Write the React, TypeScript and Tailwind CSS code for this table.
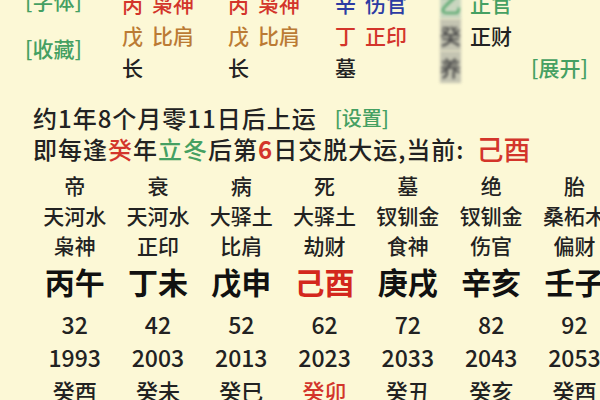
import React from "react";

const font = { fontFamily: '"Noto Sans CJK SC", "Noto Sans", sans-serif' };

type Cell = { t: string; c: string };

const pillars: { r1: Cell[]; r2: Cell[]; r3: Cell[] }[] = [
  {
    r1: [{ t: "丙", c: "text-[#d3352b]" }, { t: "枭神", c: "text-[#d3352b]" }],
    r2: [{ t: "戊", c: "text-[#bb7b34]" }, { t: "比肩", c: "text-[#bb7b34]" }],
    r3: [{ t: "长", c: "text-[#222]" }],
  },
  {
    r1: [{ t: "丙", c: "text-[#d3352b]" }, { t: "枭神", c: "text-[#d3352b]" }],
    r2: [{ t: "戊", c: "text-[#bb7b34]" }, { t: "比肩", c: "text-[#bb7b34]" }],
    r3: [{ t: "长", c: "text-[#222]" }],
  },
  {
    r1: [{ t: "辛", c: "text-[#2c3ba3]" }, { t: "伤官", c: "text-[#2c3ba3]" }],
    r2: [{ t: "丁", c: "text-[#d3352b]" }, { t: "正印", c: "text-[#d3352b]" }],
    r3: [{ t: "墓", c: "text-[#222]" }],
  },
  {
    r1: [
      { t: "乙", c: "text-[#45a062] blur-[1.5px] bg-[#c9d6bf]" },
      { t: "正官", c: "text-[#45a062]" },
    ],
    r2: [
      { t: "癸", c: "text-[#444] blur-[1.5px] bg-[#c4c4b2]" },
      { t: "正财", c: "text-[#222]" },
    ],
    r3: [{ t: "养", c: "text-[#444] blur-[1.5px] bg-[#c4c4b2]" }],
  },
];

const dayun = [
  { s: "帝", n: "天河水", g: "枭神", p: "丙午", a: "32", y: "1993", ly: "癸酉", red: false },
  { s: "衰", n: "天河水", g: "正印", p: "丁未", a: "42", y: "2003", ly: "癸未", red: false },
  { s: "病", n: "大驿土", g: "比肩", p: "戊申", a: "52", y: "2013", ly: "癸巳", red: false },
  { s: "死", n: "大驿土", g: "劫财", p: "己酉", a: "62", y: "2023", ly: "癸卯", red: true },
  { s: "墓", n: "钗钏金", g: "食神", p: "庚戌", a: "72", y: "2033", ly: "癸丑", red: false },
  { s: "绝", n: "钗钏金", g: "伤官", p: "辛亥", a: "82", y: "2043", ly: "癸亥", red: false },
  { s: "胎", n: "桑柘木", g: "偏财", p: "壬子", a: "92", y: "2053", ly: "癸酉", red: false },
  { s: "养", n: "桑柘木", g: "正财", p: "癸丑", a: "102", y: "2063", ly: "癸未", red: false },
];

function Row({ cells }: { cells: Cell[] }) {
  return (
    <div className="h-[32px] leading-[32px] flex gap-[9px] text-[21px] whitespace-nowrap">
      {cells.map((c, i) => (
        <span key={i} className={c.c}>
          {c.t}
        </span>
      ))}
    </div>
  );
}

export default function App() {
  return (
    <div
      className="w-[600px] h-[400px] overflow-hidden bg-[#fcf8d6] text-[#222] font-medium"
      style={font}
    >
      {/* top pillars */}
      <div className="flex mt-[-13px] h-[96px]">
        <div className="w-[122px] pl-[25px] flex flex-col text-[21px] text-[#45a062]">
          <div className="h-[26px] leading-[26px]">[字体]</div>
          <div className="h-[26px] leading-[26px] mt-[22px]">[收藏]</div>
        </div>
        <div className="w-[106px]">
          <Row cells={pillars[0].r1} />
          <Row cells={pillars[0].r2} />
          <Row cells={pillars[0].r3} />
        </div>
        <div className="w-[107px]">
          <Row cells={pillars[1].r1} />
          <Row cells={pillars[1].r2} />
          <Row cells={pillars[1].r3} />
        </div>
        <div className="w-[105px]">
          <Row cells={pillars[2].r1} />
          <Row cells={pillars[2].r2} />
          <Row cells={pillars[2].r3} />
        </div>
        <div className="w-[90px]">
          <Row cells={pillars[3].r1} />
          <Row cells={pillars[3].r2} />
          <Row cells={pillars[3].r3} />
        </div>
        <div className="flex-1 flex items-end justify-end pr-[12px]">
          <div className="h-[32px] leading-[32px] text-[21px] text-[#45a062]">[展开]</div>
        </div>
      </div>

      {/* info lines */}
      <div className="pl-[33px] mt-[20px]">
        <div className="h-[30px] leading-[30px] flex items-center whitespace-nowrap">
          <span className="text-[24px] tracking-[1px]">约1年8个月零11日后上运</span>
          <span className="text-[20px] text-[#45a062] ml-[18px]">[设置]</span>
        </div>
        <div className="h-[32px] leading-[32px] flex items-center whitespace-nowrap text-[24px] tracking-[1px]">
          <span>即每逢</span>
          <span className="text-[#d3352b]">癸</span>
          <span>年</span>
          <span className="text-[#45a062]">立冬</span>
          <span>后第</span>
          <span className="text-[#d3352b] font-bold">6</span>
          <span>日交脱大运,当前:</span>
          <span className="text-[#d3352b] text-[27px] ml-[12px] tracking-normal">己酉</span>
        </div>
      </div>

      {/* dayun grid */}
      <div className="flex pl-[33px] mt-[5px]">
        {dayun.map((d, i) => (
          <div
            key={i}
            className="w-[83.3px] shrink-0 flex flex-col items-center whitespace-nowrap"
          >
            <div className="h-[30px] leading-[30px] text-[21px]">{d.s}</div>
            <div className="h-[31px] leading-[31px] text-[21px]">{d.n}</div>
            <div className="h-[28px] leading-[28px] text-[21px]">{d.g}</div>
            <div
              className={`h-[44px] leading-[44px] text-[30px] font-bold ${
                d.red ? "text-[#d3271d]" : "text-[#111]"
              }`}
            >
              {d.p}
            </div>
            <div className="h-[42px] leading-[42px] text-[23px]">{d.a}</div>
            <div className="h-[24px] leading-[24px] text-[23px]">{d.y}</div>
            <div
              className={`h-[42px] leading-[42px] text-[22px] ${
                d.red ? "text-[#d3352b]" : ""
              }`}
            >
              {d.ly}
            </div>
          </div>
        ))}
      </div>
    </div>
  );
}
